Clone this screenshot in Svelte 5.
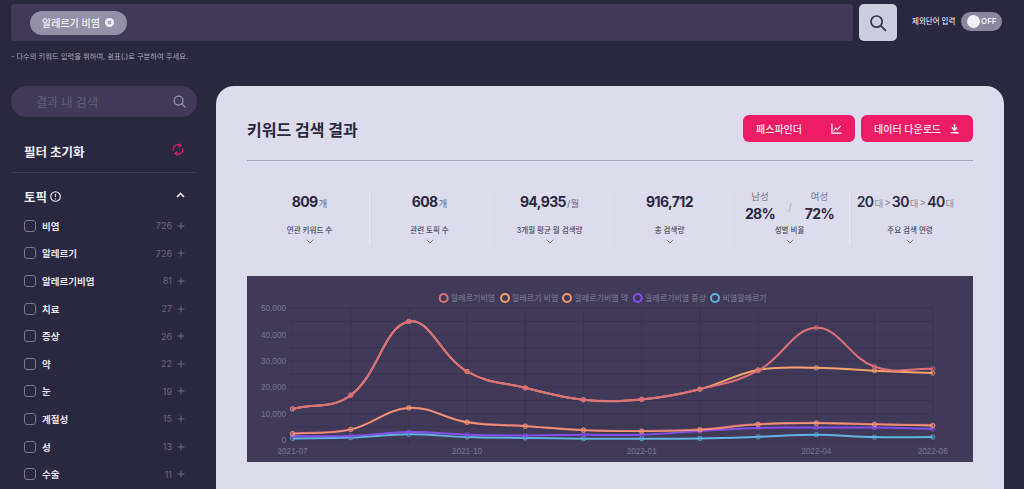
<script>
  const topics = [
    ['비염', 726], ['알레르기', 726], ['알레르기비염', 81], ['치료', 27], ['증상', 26],
    ['약', 22], ['눈', 19], ['계절성', 15], ['성', 13], ['수술', 11]
  ];
  const x0 = 292.5, step = 58.2, y0 = 440, yScale = 131.7 / 50000;
  const X = (i) => x0 + i * step;
  const Y = (v) => y0 - v * yScale;
  const months = Array.from({ length: 12 }, (_, i) => i);
  const ticks = [0, 10000, 20000, 30000, 40000, 50000];
  const minor = Array.from({ length: 11 }, (_, i) => i * 5000);

  const series = [
    { color: '#5fb4e0', w: 2, data: [600, 900, 2200, 1100, 800, 500, 500, 600, 1200, 2000, 1100, 1100] },
    { color: '#8350e8', w: 2, data: [1500, 1500, 3000, 2000, 1700, 2000, 2000, 3400, 4600, 4700, 4700, 4200] },
    { color: '#dc6f78', w: 2.2, data: [2500, 4000, 12200, 6800, 5300, 3800, 3400, 4000, 6000, 6500, 6000, 5600] },
    { color: '#f09a72', w: 1.2, data: [2300, 4000, 12200, 6700, 5200, 3700, 3300, 3800, 5900, 6300, 5900, 5400] },
    { color: '#f2a36c', w: 2, data: [11800, 17000, 45000, 26000, 19800, 15300, 15400, 19300, 26600, 27400, 26300, 25400] },
    { color: '#dc6f78', w: 2, data: [11800, 17000, 45000, 26000, 19800, 15300, 15500, 19300, 26300, 42600, 27800, 27000] }
  ];

  function spline(data, t = 0.4) {
    const p = data.map((v, i) => [X(i), Y(v)]);
    const cps = p.map((c, i) => {
      const a = p[i - 1] || c, b = p[i + 1] || c;
      const d1 = Math.hypot(c[0] - a[0], c[1] - a[1]);
      const d2 = Math.hypot(b[0] - c[0], b[1] - c[1]);
      const s = d1 + d2 || 1;
      const fa = (t * d1) / s, fb = (t * d2) / s;
      return {
        in: [c[0] - fa * (b[0] - a[0]), c[1] - fa * (b[1] - a[1])],
        out: [c[0] + fb * (b[0] - a[0]), c[1] + fb * (b[1] - a[1])]
      };
    });
    let d = `M${p[0][0]} ${p[0][1]}`;
    for (let i = 1; i < p.length; i++) {
      const o = cps[i - 1].out, n = cps[i].in;
      d += `C${o[0].toFixed(1)} ${o[1].toFixed(1)} ${n[0].toFixed(1)} ${n[1].toFixed(1)} ${p[i][0].toFixed(1)} ${p[i][1].toFixed(1)}`;
    }
    return d;
  }

  const legend = [
    { cx: 443.7, tx: 451, c: '#dc6f78', t: '알레르기비염' },
    { cx: 505, tx: 512, c: '#f2a36c', t: '알레르기 비염' },
    { cx: 567, tx: 574.5, c: '#f09a72', t: '알레르기비염 약' },
    { cx: 637.7, tx: 645, c: '#8350e8', t: '알레르기비염 증상' },
    { cx: 715, tx: 722.5, c: '#5fb4e0', t: '비염알레르기' }
  ];
  const xlabels = [[0, '2021-07'], [3, '2021-10'], [6, '2022-01'], [9, '2022-04'], [11, '2022-06']];
</script>

<div class="page">
  <header class="top">
    <div class="searchbar">
      <span class="chip">알레르기 비염
        <svg width="9" height="9" viewBox="0 0 10 10"><circle cx="5" cy="5" r="5" fill="#f1f0f8"/><path d="M3.3 3.3l3.4 3.4M6.7 3.3l-3.4 3.4" stroke="#8f8ba6" stroke-width="1.2"/></svg>
      </span>
    </div>
    <button class="searchbtn" aria-label="검색">
      <svg width="18" height="18" viewBox="0 0 18 18" fill="none" stroke="#35324a" stroke-width="1.7"><circle cx="7.6" cy="7.6" r="5.6"/><path d="M11.8 11.8l4.6 4.6" stroke-linecap="round"/></svg>
    </button>
    <span class="exclude">제외단어 입력</span>
    <span class="toggle"><i></i><b>OFF</b></span>
  </header>
  <p class="hint">- 다수의 키워드 입력을 위하여, 쉼표(,)로 구분하여 주세요.</p>

  <div class="body">
    <aside class="side">
      <div class="sidesearch">
        <span>결과 내 검색</span>
        <svg width="13" height="13" viewBox="0 0 14 14" fill="none" stroke="#9b98ae" stroke-width="1.3"><circle cx="6" cy="6" r="4.8"/><path d="M9.5 9.5l3.6 3.6" stroke-linecap="round"/></svg>
      </div>
      <div class="reset">
        <strong>필터 초기화</strong>
        <svg width="12" height="13" viewBox="0 0 13 14" fill="none" stroke="#e81e68" stroke-width="1.3"><path d="M1.6 8.2A5 5 0 0 1 9.6 2.9"/><path d="M11.4 5.8A5 5 0 0 1 3.4 11.1"/><path d="M7.4 .8l2.4 2.1-2.6 1.6M5.6 13.2l-2.4-2.1 2.6-1.6"/></svg>
      </div>
      <div class="topichead">
        <strong>토픽</strong>
        <svg width="11" height="11" viewBox="0 0 11 11" fill="none" stroke="#f1f0f8" stroke-width="1.1"><circle cx="5.5" cy="5.5" r="4.8"/><path d="M5.5 2.8v3.4M5.5 7.4v1"/></svg>
        <svg class="up" width="9" height="6" viewBox="0 0 9 6" fill="none" stroke="#f1f0f8" stroke-width="1.6"><path d="M1 5l3.5-3.5L8 5"/></svg>
      </div>
      <ul>
        {#each topics as [name, n]}
          <li>
            <span class="box"></span>
            <span class="name">{name}</span>
            <span class="num">{n}</span>
            <svg width="8" height="8" viewBox="0 0 8 8" stroke="#6d6a82"><path d="M4 .5v7M.5 4h7"/></svg>
          </li>
        {/each}
      </ul>
    </aside>

    <main class="card">
      <div class="cardhead">
        <h1>키워드 검색 결과</h1>
        <button class="pink">패스파인더
          <svg width="11" height="11" viewBox="0 0 12 12" fill="none" stroke="#fff" stroke-width="1.3"><path d="M1 .5v10.5h10.5"/><path d="M2.6 8.6l2.6-3 1.8 1.6 3.6-4"/></svg>
        </button>
        <button class="pink">데이터 다운로드
          <svg width="11" height="11" viewBox="0 0 12 12" fill="none" stroke="#fff" stroke-width="1.6"><path d="M6 1v6.5M3.2 5L6 7.8 8.8 5"/><path d="M1.5 10.6h9"/></svg>
        </button>
      </div>

      <section class="stats">
        <div class="stat"><div class="val"><b>809</b><small>개</small></div><p>연관 키워드 수</p><svg class="chev" width="8" height="5" viewBox="0 0 8 5" fill="none" stroke="#77748c"><path d="M.8.8L4 4l3.2-3.2"/></svg></div>
        <div class="stat"><div class="val"><b>608</b><small>개</small></div><p>관련 토픽 수</p><svg class="chev" width="8" height="5" viewBox="0 0 8 5" fill="none" stroke="#77748c"><path d="M.8.8L4 4l3.2-3.2"/></svg></div>
        <div class="stat"><div class="val"><b>94,935</b><small>/월</small></div><p>3개월 평균 월 검색량</p><svg class="chev" width="8" height="5" viewBox="0 0 8 5" fill="none" stroke="#77748c"><path d="M.8.8L4 4l3.2-3.2"/></svg></div>
        <div class="stat"><div class="val"><b>916,712</b></div><p>총 검색량</p><svg class="chev" width="8" height="5" viewBox="0 0 8 5" fill="none" stroke="#77748c"><path d="M.8.8L4 4l3.2-3.2"/></svg></div>
        <div class="stat">
          <div class="val gender">
            <div><em>남성</em><b>28%</b></div>
            <span class="slash">/</span>
            <div><em>여성</em><b>72%</b></div>
          </div>
          <p>성별 비율</p><svg class="chev" width="8" height="5" viewBox="0 0 8 5" fill="none" stroke="#77748c"><path d="M.8.8L4 4l3.2-3.2"/></svg>
        </div>
        <div class="stat">
          <div class="val ages"><b>20</b><small>대</small><span>&gt;</span><b>30</b><small>대</small><span>&gt;</span><b>40</b><small>대</small></div>
          <p>주요 검색 연령</p><svg class="chev" width="8" height="5" viewBox="0 0 8 5" fill="none" stroke="#77748c"><path d="M.8.8L4 4l3.2-3.2"/></svg>
        </div>
      </section>

      <div class="chart">
        <svg width="726" height="186" viewBox="247 276 726 186">
          {#each minor as v}
            <line x1={x0 - 5} x2={X(11)} y1={Y(v)} y2={Y(v)} stroke="#39344f" stroke-width="1"/>
          {/each}
          {#each months as i}
            <line x1={X(i)} x2={X(i)} y1={Y(50000)} y2={y0 + 4} stroke="#39344f" stroke-width="1"/>
          {/each}
          {#each ticks as v}
            <text class="axis" x="286" y={Y(v) + 3} text-anchor="end">{v.toLocaleString('en-US')}</text>
          {/each}
          {#each xlabels as [i, t]}
            <text class="axis" x={X(i)} y="454" text-anchor="middle">{t}</text>
          {/each}
          {#each legend as l}
            <circle cx={l.cx} cy="298" r="4" fill="none" stroke={l.c} stroke-width="2"/>
            <text class="legend" x={l.tx} y="301">{l.t}</text>
          {/each}
          {#each series as s}
            <path d={spline(s.data)} fill="none" stroke={s.color} stroke-width={s.w}/>
            {#each s.data as v, i}
              <circle cx={X(i)} cy={Y(v)} r="2.2" fill={s.color} fill-opacity="0.15" stroke={s.color} stroke-opacity="0.75" stroke-width="1"/>
            {/each}
          {/each}
        </svg>
      </div>
    </main>
  </div>
</div>

<style>
  :global(body) { margin: 0; background: #2a2740; }
  .page {
    width: 1024px; height: 489px; overflow: hidden; background: #2a2740; color: #f1f0f8;
    font-family: Inter, "Noto Sans CJK KR", sans-serif; opacity: 0.999;
  }
  .top { display: flex; align-items: flex-start; padding: 4px 22px 0 11px; height: 37px; }
  .searchbar {
    flex: 0 0 842px; height: 37px; box-sizing: border-box; background: #403a58; border-radius: 4px;
    display: flex; align-items: center; padding-left: 19px;
  }
  .chip {
    display: flex; align-items: center; gap: 5px; height: 24px; padding: 0 13px 0 12px; border-radius: 12px;
    background: #9490aa; color: #f4f3fa; font-size: 10px; font-weight: 500;
  }
  .searchbtn {
    width: 38px; height: 37px; margin-left: 6px; border: 0; padding: 0; border-radius: 5px; background: #cdcde0;
    display: flex; align-items: center; justify-content: center;
  }
  .exclude { margin: 12px 0 0 15px; font-size: 7.5px; font-weight: 500; line-height: 11px; color: #dcdbe8; width: 49px; white-space: nowrap; }
  .toggle {
    position: relative; display: block; width: 41px; height: 19px; margin-top: 8px; border-radius: 10px; background: #8b87a0;
  }
  .toggle i { position: absolute; left: 6px; top: 3px; width: 13px; height: 13px; border-radius: 50%; background: #f1f0f8; }
  .toggle b { position: absolute; left: 20px; top: 4px; font-size: 8px; line-height: 11px; font-weight: 600; color: #eeedf5; }
  .hint { margin: 10px 0 0 11px; height: 12px; font-size: 7.3px; line-height: 12px; color: #a9a7b9; }
  .body { display: flex; margin-top: 23px; padding-left: 11px; align-items: flex-start; }
  .side { width: 186px; flex: none; }
  .sidesearch {
    display: flex; align-items: center; justify-content: space-between; height: 31px; padding: 0 11px 0 25px;
    border-radius: 16px; background: #403a58; color: #635f7c; font-size: 12px;
  }
  .reset { display: flex; align-items: center; justify-content: space-between; height: 56px; box-sizing: border-box; padding: 14px 13px 0 13px; border-bottom: 1px solid #3e3b54; }
  .reset strong { font-size: 12.5px; font-weight: 700; }
  .reset svg { margin-top: -4px; }
  .topichead { display: flex; align-items: center; gap: 3px; height: 46px; padding: 0 12px 0 13px; }
  .topichead strong { font-size: 12.5px; font-weight: 700; }
  .topichead .up { margin-left: auto; margin-top: -2px; }
  ul { list-style: none; margin: -7px 0 0; padding: 0 12px 0 13px; }
  li { display: flex; align-items: center; height: 27.6px; font-size: 9.5px; font-weight: 600; color: #e6e5ef; }
  .box { width: 10px; height: 10px; border: 1px solid #7b788f; border-radius: 3px; margin-right: 6px; flex: none; }
  .name { flex: 1; }
  .num { font-size: 9px; font-weight: 400; color: #6d6a82; margin-right: 5px; }
  .card {
    margin-left: 19px; width: 788px; height: 420px; box-sizing: border-box; background: #dddcec;
    border-radius: 18px 18px 0 0; padding: 29px 31px 0;
  }
  .cardhead { display: flex; align-items: center; gap: 6px; height: 27px; padding-bottom: 18px; border-bottom: 1px solid #a9a7bb; }
  h1 { margin: 0 auto 0 0; font-size: 16px; font-weight: 700; color: #2b2842; }
  .pink {
    width: 112px; height: 27px; box-sizing: border-box; border: 0; border-radius: 6px; background: #ee1b66; color: #fbeaf1;
    font: 500 10px Inter, "Noto Sans CJK KR", sans-serif; display: flex; align-items: center; justify-content: space-between; padding: 0 13px;
  }
  .stats { display: grid; grid-template-columns: repeat(6, 120px); margin: 31px 0 0 3px; height: 84px; }
  .stat { display: flex; flex-direction: column; align-items: center; height: 53px; box-sizing: border-box; border-right: 1px dotted #e6e5f2; padding-top: 1px; }
  .stat:nth-child(1), .stat:nth-child(5) { border-right-color: #f6f6fb; }
  .stat:last-child { border-right: 0; }
  .val { height: 32px; display: flex; align-items: flex-start; justify-content: center; white-space: nowrap; color: #2b2842; line-height: 18px; }
  .val b { font-size: 14px; font-weight: 700; letter-spacing: -0.6px; }
  .val small { font-size: 9.5px; color: #6d6a82; margin: 3px 0 0 1px; line-height: 15px; }
  .gender { gap: 13px; margin-top: -5px; height: 37px; align-items: center; }
  .gender div { display: flex; flex-direction: column; align-items: center; }
  .gender em { font-style: normal; font-size: 9.5px; color: #77748c; line-height: 13px; margin-bottom: 2px; }
  .gender b { line-height: 18px; }
  .slash { font-size: 10px; color: #9a98ad; font-weight: 300; }
  .ages { margin-right: 9px; }
  .ages b { font-weight: 600; }
  .ages small { color: #92909f; }
  .ages span { font-size: 10px; color: #85829a; margin: 0 1px; line-height: 18px; }
  .stat p { margin: 0; font-size: 7.5px; line-height: 11px; color: #4e4b63; font-weight: 500; }
  .chev { margin-top: 3px; }
  .chart { width: 726px; height: 186px; background: #403a58; }
  .chart svg { display: block; }
  .axis { font: 8.2px "Liberation Sans", sans-serif; fill: #7b7792; }
  .legend { font: 500 8px Inter, "Noto Sans CJK KR", sans-serif; fill: #75718c; }
</style>
